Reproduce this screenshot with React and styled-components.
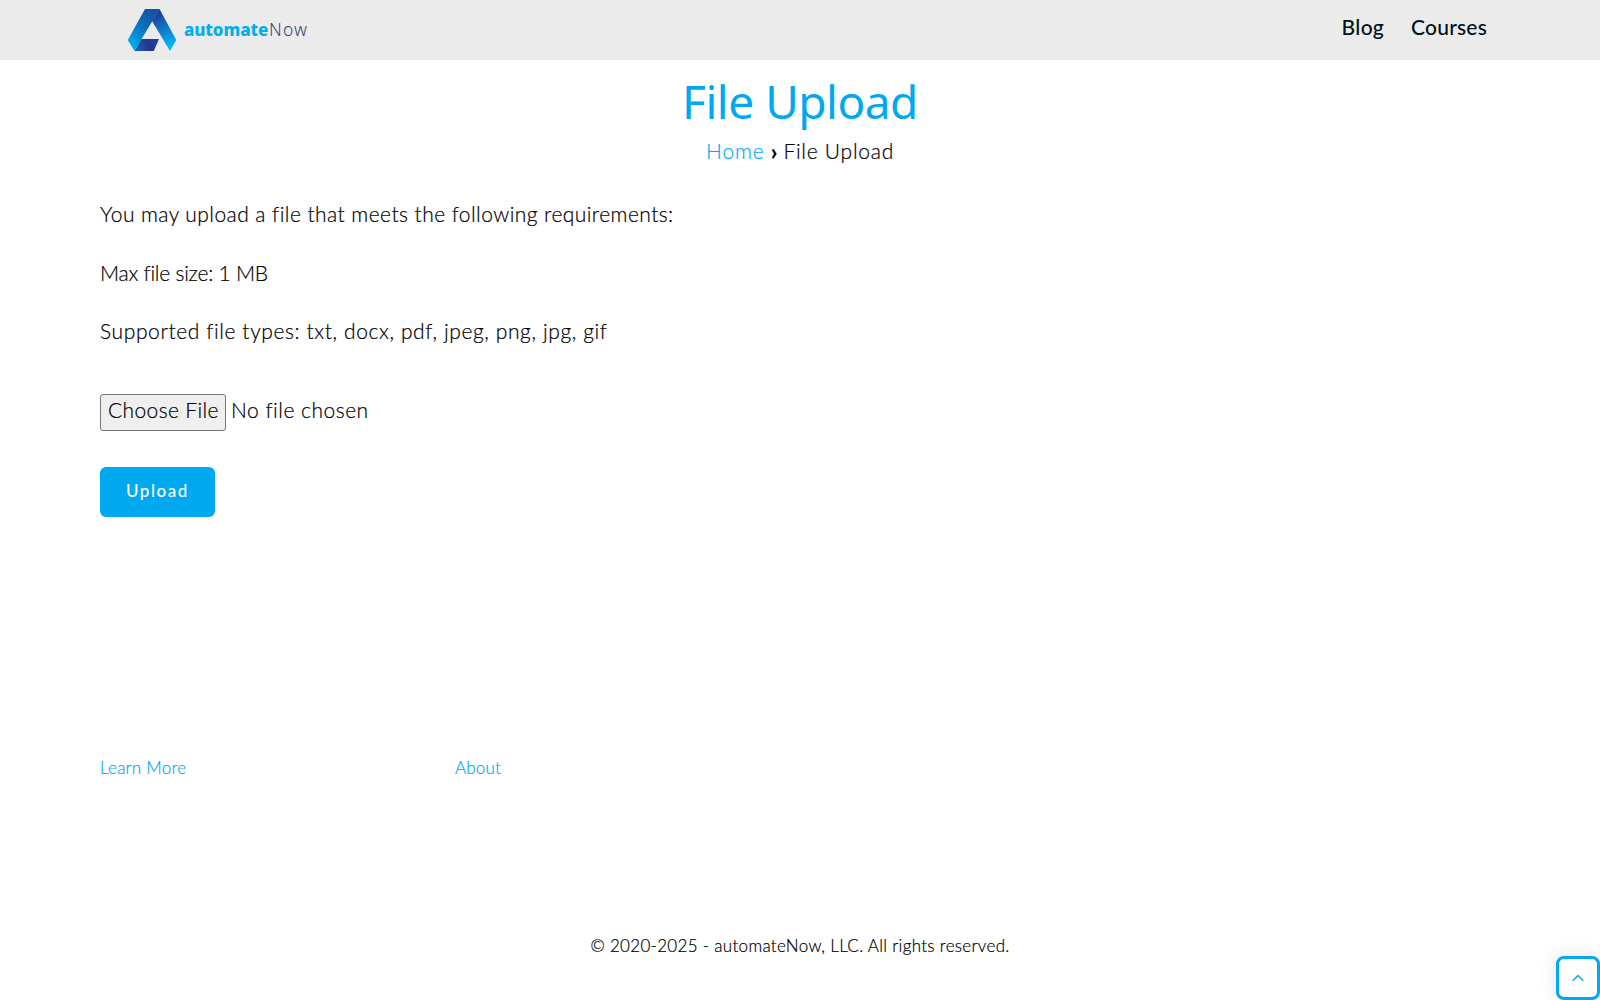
import React from "react";
import styled, { createGlobalStyle } from "styled-components";

const GlobalStyle = createGlobalStyle`
  * { box-sizing: border-box; }
  body {
    margin: 0;
    background: #fff;
    color: #000;
    font-family: Lato, "Liberation Sans", sans-serif;
    font-weight: 300;
    font-size: 21px;
    line-height: 34px;
    -webkit-text-stroke: 0.2px currentColor;
    overflow: hidden;
  }
`;

const Page = styled.div`
  display: flex;
  flex-direction: column;
  height: 1000px;
`;

const Header = styled.header`
  display: flex;
  justify-content: space-between;
  height: 60px;
  padding: 0 113px 0 126px;
  background: #ebebeb;
  -webkit-text-stroke: 0;
`;

const Logo = styled.a`
  display: flex;
  align-items: flex-start;
  color: #00aeef;
`;

const LogoMark = styled.svg`
  width: 52px;
  height: 46px;
  margin-top: 7px;
`;

const Wordmark = styled.span`
  margin: 15px 0 0 6px;
  font: 800 17px/28px "Noto Sans", sans-serif;
  letter-spacing: -0.1px;
`;

const WordmarkLight = styled.span`
  margin-left: 1px;
  color: #3c4076;
  font-weight: 300;
  font-size: 17.5px;
  letter-spacing: 1.1px;
`;

const Nav = styled.nav`
  display: flex;
  gap: 27px;
`;

const NavLink = styled.a`
  color: #00131c;
  font-weight: 500;
  line-height: 54px;
  letter-spacing: ${(p) => p.$spacing};
`;

const Title = styled.h1`
  margin: 13px 0 5px;
  color: #00a9ef;
  text-align: center;
  font: 400 46px/56px "Noto Sans", sans-serif;
  letter-spacing: -0.49px;
  -webkit-text-stroke: 0;
`;

const Breadcrumb = styled.nav`
  display: flex;
  justify-content: center;
  gap: 6px;
  letter-spacing: 0.75px;
`;

const Separator = styled.span`
  font-weight: 700;
  font-size: 23px;
  letter-spacing: 0;
`;

const Link = styled.a`
  color: #00a9ef;
  letter-spacing: ${(p) => p.$spacing};
`;

const Main = styled.main`
  display: flex;
  flex-direction: column;
  align-items: flex-start;
  gap: 24.5px;
  height: 586px;
  padding: 29px 100px 0;
`;

const Paragraph = styled.p`
  margin: 0;
  letter-spacing: ${(p) => p.$spacing};
`;

const Form = styled.form`
  display: flex;
  flex-direction: column;
  align-items: flex-start;
  gap: 36px;
  margin-top: 21px;
`;

const FilePicker = styled.label`
  display: flex;
  gap: 5px;
  line-height: 30px;
`;

const ChooseButton = styled.span`
  width: 126px;
  height: 37px;
  padding-left: 7px;
  border: 1px solid #767676;
  border-radius: 3px;
  background: #efefef;
  letter-spacing: 0.37px;
`;

const FileStatus = styled.span`
  padding-top: 1px;
  letter-spacing: 0.5px;
`;

const SubmitButton = styled.button`
  width: 115px;
  height: 50px;
  padding: 0 0 2px 0;
  border: 0;
  border-radius: 6px;
  background: #00a9ef;
  color: #fff;
  font: 500 17px/45px Lato, sans-serif;
  letter-spacing: 1.55px;
  -webkit-text-stroke: 0;
`;

const FooterLinks = styled.div`
  display: grid;
  grid-template-columns: 355px 355px;
  height: 178px;
  padding: 0 100px;
  font-size: 17px;
  line-height: 28px;
`;

const Copyright = styled.footer`
  text-align: center;
  font-size: 17px;
  line-height: 28px;
  letter-spacing: 0.31px;
`;

const ScrollTop = styled.button`
  position: fixed;
  right: 0;
  bottom: 0;
  display: flex;
  align-items: center;
  justify-content: center;
  width: 44px;
  height: 44px;
  padding: 0;
  border: 3px solid #00a9ef;
  border-radius: 8px;
  background: #fff;
  box-shadow: 0 0 18px rgba(0, 0, 0, 0.12);
`;

function LogoIcon() {
  return (
    <LogoMark viewBox="126 7 52 46" aria-hidden="true">
      <defs>
        <linearGradient id="left" gradientUnits="userSpaceOnUse" x1="155" y1="12" x2="131" y2="46">
          <stop offset="0" stopColor="#1550a4" />
          <stop offset="0.45" stopColor="#0a70bd" />
          <stop offset="1" stopColor="#00aeef" />
        </linearGradient>
        <linearGradient id="right" gradientUnits="userSpaceOnUse" x1="155" y1="13" x2="172" y2="46">
          <stop offset="0" stopColor="#233390" />
          <stop offset="0.35" stopColor="#1268b8" />
          <stop offset="1" stopColor="#00b9f7" />
        </linearGradient>
        <linearGradient id="bar" gradientUnits="userSpaceOnUse" x1="137" y1="48" x2="156" y2="42">
          <stop offset="0" stopColor="#1a5fae" />
          <stop offset="0.55" stopColor="#263791" />
          <stop offset="1" stopColor="#20409a" />
        </linearGradient>
      </defs>
      <path d="M145 9H159.5L134.5 51L127.8 40Z" fill="url(#left)" />
      <path d="M159.5 9L176.3 40L170 51L152 21Z" fill="url(#right)" />
      <path d="M141.5 39H159L153.8 51H134.5Z" fill="url(#bar)" />
    </LogoMark>
  );
}

export default function App() {
  return (
    <Page>
      <GlobalStyle />
      <Header>
        <Logo>
          <LogoIcon />
          <Wordmark>
            automate<WordmarkLight>Now</WordmarkLight>
          </Wordmark>
        </Logo>
        <Nav>
          <NavLink $spacing="0.3px">Blog</NavLink>
          <NavLink $spacing="0.2px">Courses</NavLink>
        </Nav>
      </Header>
      <Title>File Upload</Title>
      <Breadcrumb>
        <Link $spacing="0.9px">Home</Link>
        <Separator>›</Separator>
        <span>File Upload</span>
      </Breadcrumb>
      <Main>
        <Paragraph $spacing="0.44px">You may upload a file that meets the following requirements:</Paragraph>
        <Paragraph $spacing="-0.23px">Max file size: 1 MB</Paragraph>
        <Paragraph $spacing="0.6px">Supported file types: txt, docx, pdf, jpeg, png, jpg, gif</Paragraph>
        <Form>
          <FilePicker>
            <ChooseButton>Choose File</ChooseButton>
            <FileStatus>No file chosen</FileStatus>
          </FilePicker>
          <SubmitButton type="button">Upload</SubmitButton>
        </Form>
      </Main>
      <FooterLinks>
        <Link $spacing="0.25px">Learn More</Link>
        <Link $spacing="0.15px">About</Link>
      </FooterLinks>
      <Copyright>© 2020-2025 - automateNow, LLC. All rights reserved.</Copyright>
      <ScrollTop type="button" aria-label="Back to top">
        <svg width="12" height="8" viewBox="0 0 12 8" fill="none" stroke="#00a9ef" strokeWidth="1.3">
          <path d="M0.7 6.8L6 1.5L11.3 6.8" />
        </svg>
      </ScrollTop>
    </Page>
  );
}
